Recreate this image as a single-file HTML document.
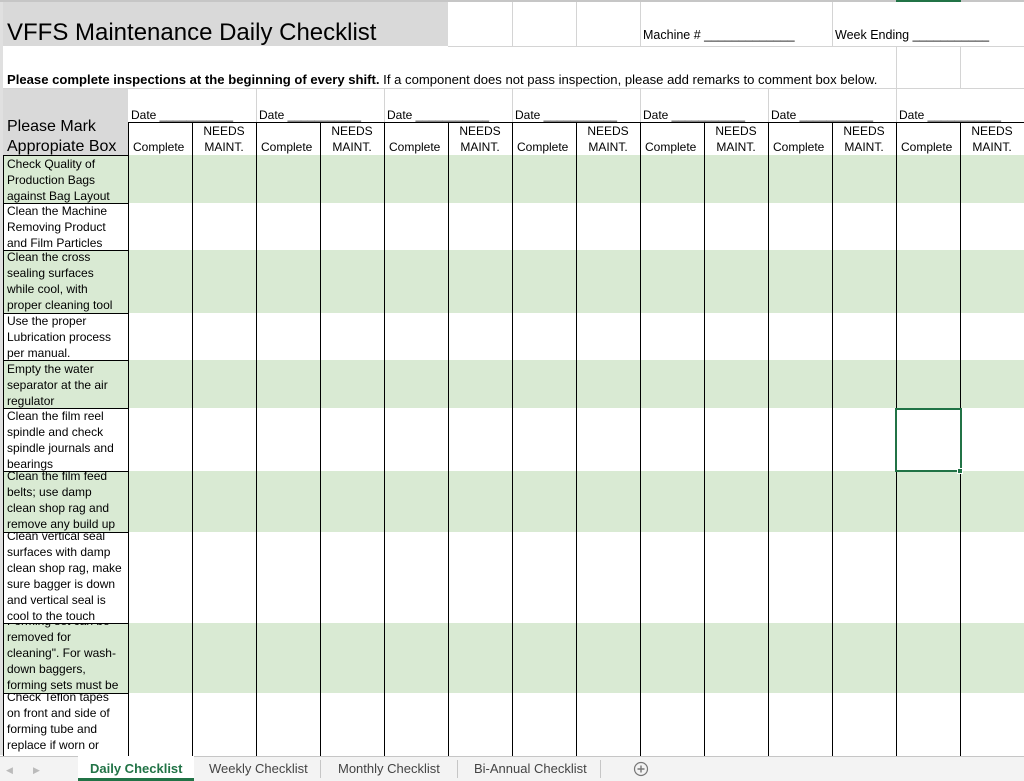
<!DOCTYPE html>
<html><head><meta charset="utf-8"><style>
*{margin:0;padding:0;box-sizing:border-box}
body{width:1024px;height:781px;overflow:hidden;background:#fff;font-family:"Liberation Sans",Arial,sans-serif;color:#000;position:relative}
.a{position:absolute}
.g{background:#d9ead3}
.vl{position:absolute;width:1px;background:#000}
.gl{position:absolute;background:#d4d4d4}
.cell{position:absolute;left:3px;width:126px;overflow:hidden;border:1px solid #000;font-size:12px;line-height:16px;padding-left:3px}
.t{position:absolute;font-size:12px;line-height:16px;white-space:nowrap}
</style></head><body>
<div class="a" style="left:0;top:0;width:1024px;height:2px;background:#c6c6c6"></div>
<div class="a" style="left:896px;top:0;width:65px;height:2px;background:#217346"></div>
<div class="a" style="left:3px;top:2px;width:445px;height:44px;background:#d9d9d9"></div>
<div class="t" style="left:7px;top:19px;font-size:24px;line-height:28px">VFFS Maintenance Daily Checklist</div>
<div class="gl" style="left:448px;width:576px;height:1px;top:46px"></div>
<div class="gl" style="left:512px;top:2px;width:1px;height:44px"></div>
<div class="gl" style="left:576px;top:2px;width:1px;height:44px"></div>
<div class="gl" style="left:640px;top:2px;width:1px;height:44px"></div>
<div class="gl" style="left:832px;top:2px;width:1px;height:44px"></div>
<div class="t" style="left:643px;top:27px;font-size:12.5px">Machine # _____________</div>
<div class="t" style="left:835px;top:27px;font-size:12.5px">Week Ending ___________</div>
<div class="gl" style="left:0;top:2px;width:3px;height:753px;background:#e0e0e0"></div>
<div class="gl" style="left:896px;top:47px;width:1px;height:41px"></div>
<div class="gl" style="left:960px;top:47px;width:1px;height:41px"></div>
<div class="gl" style="left:3px;top:88px;width:1021px;height:1px"></div>
<div class="t" style="left:7px;top:72px;font-size:13.1px"><b>Please complete inspections at the beginning of every shift.</b> If a component does not pass inspection, please add remarks to comment box below.</div>
<div class="a" style="left:3px;top:89px;width:125px;height:66px;background:#d9d9d9"></div>
<div class="t" style="left:7px;top:117px;font-size:16px;line-height:20px">Please Mark<br>Appropiate Box</div>
<div class="gl" style="left:256px;top:89px;width:1px;height:34px"></div>
<div class="gl" style="left:384px;top:89px;width:1px;height:34px"></div>
<div class="gl" style="left:512px;top:89px;width:1px;height:34px"></div>
<div class="gl" style="left:640px;top:89px;width:1px;height:34px"></div>
<div class="gl" style="left:768px;top:89px;width:1px;height:34px"></div>
<div class="gl" style="left:896px;top:89px;width:1px;height:34px"></div>
<div class="a" style="left:128px;top:122px;width:896px;height:1px;background:#000"></div>
<div class="t" style="left:131px;top:107px">Date ___________</div>
<div class="t" style="left:259px;top:107px">Date ___________</div>
<div class="t" style="left:387px;top:107px">Date ___________</div>
<div class="t" style="left:515px;top:107px">Date ___________</div>
<div class="t" style="left:643px;top:107px">Date ___________</div>
<div class="t" style="left:771px;top:107px">Date ___________</div>
<div class="t" style="left:899px;top:107px">Date ___________</div>
<div id="hdr"></div>
<div class="a g" style="left:128px;top:155px;width:896px;height:48px"></div>
<div class="a g" style="left:128px;top:250px;width:896px;height:63px"></div>
<div class="a g" style="left:128px;top:360px;width:896px;height:48px"></div>
<div class="a g" style="left:128px;top:471px;width:896px;height:61px"></div>
<div class="a g" style="left:128px;top:623px;width:896px;height:70px"></div>

<div class="cell g" style="top:155px;height:49px"><div style="margin-top:0">Check Quality of<br>Production Bags<br>against Bag Layout</div></div>
<div class="cell" style="top:203px;height:48px"><div style="margin-top:-1px">Clean the Machine<br>Removing Product<br>and Film Particles</div></div>
<div class="cell g" style="top:250px;height:64px"><div style="margin-top:-2px">Clean the cross<br>sealing surfaces<br>while cool, with<br>proper cleaning tool</div></div>
<div class="cell" style="top:313px;height:48px"><div style="margin-top:-1px">Use the proper<br>Lubrication process<br>per manual.</div></div>
<div class="cell g" style="top:360px;height:49px"><div style="margin-top:0">Empty the water<br>separator at the air<br>regulator</div></div>
<div class="cell" style="top:408px;height:64px"><div style="margin-top:-1px">Clean the film reel<br>spindle and check<br>spindle journals and<br>bearings</div></div>
<div class="cell g" style="top:471px;height:62px"><div style="margin-top:-4px">Clean the film feed<br>belts; use damp<br>clean shop rag and<br>remove any build up</div></div>
<div class="cell" style="top:532px;height:92px"><div style="margin-top:-5px">Clean vertical seal<br>surfaces with damp<br>clean shop rag, make<br>sure bagger is down<br>and vertical seal is<br>cool to the touch</div></div>
<div class="cell g" style="top:623px;height:71px"><div style="margin-top:-11px">Forming set can be<br>removed for<br>cleaning". For wash-<br>down baggers,<br>forming sets must be</div></div>
<div class="cell" style="top:693px;height:70px"><div style="margin-top:-5px">Check Teflon tapes<br>on front and side of<br>forming tube and<br>replace if worn or<br>damaged</div></div>

<div id="vls"></div>
<div class="a" style="left:895px;top:408px;width:67px;height:64px;border:2px solid #217346"></div>
<div class="a" style="left:957px;top:468px;width:6px;height:6px;background:#217346;border:1px solid #fff"></div>
<div class="a" style="left:0;top:756px;width:1024px;height:25px;background:#f3f3f3;border-top:1px solid #c6c6c6"></div>
<div class="t" style="left:6px;top:762px;color:#bbb;font-size:9px">&#9664;</div>
<div class="t" style="left:33px;top:762px;color:#bbb;font-size:9px">&#9654;</div>
<div class="a" style="left:78px;top:756px;width:116px;height:25px;background:#fff;border-bottom:3px solid #217346"></div>
<div class="t" style="left:90px;top:761px;font-size:13px;font-weight:bold;color:#217346">Daily Checklist</div>
<div class="t" style="left:209px;top:761px;font-size:13px;color:#444">Weekly Checklist</div>
<div class="a" style="left:320px;top:760px;width:1px;height:18px;background:#c6c6c6"></div>
<div class="t" style="left:338px;top:761px;font-size:13px;color:#444">Monthly Checklist</div>
<div class="a" style="left:457px;top:760px;width:1px;height:18px;background:#c6c6c6"></div>
<div class="t" style="left:474px;top:761px;font-size:13px;color:#444">Bi-Annual Checklist</div>
<div class="a" style="left:600px;top:760px;width:1px;height:18px;background:#c6c6c6"></div>
<svg class="a" style="left:633px;top:761px" width="16" height="16"><circle cx="8" cy="8" r="6.5" fill="none" stroke="#777" stroke-width="1.2"/><path d="M8 4.5v7M4.5 8h7" stroke="#777" stroke-width="1.4"/></svg>
<script>
var h='',v='';
for(var i=0;i<7;i++){var x=128+i*128;
h+='<div class="t" style="left:'+(x+5)+'px;top:139px">Complete</div>';
h+='<div class="t" style="left:'+(x+64)+'px;width:64px;text-align:center;top:123px">NEEDS<br>MAINT.</div>';}
document.getElementById('hdr').innerHTML=h;
for(var x=128;x<1024;x+=64){v+='<div class="vl" style="left:'+x+'px;top:122px;height:634px"></div>';}
document.getElementById('vls').innerHTML=v;
</script>
</body></html>
